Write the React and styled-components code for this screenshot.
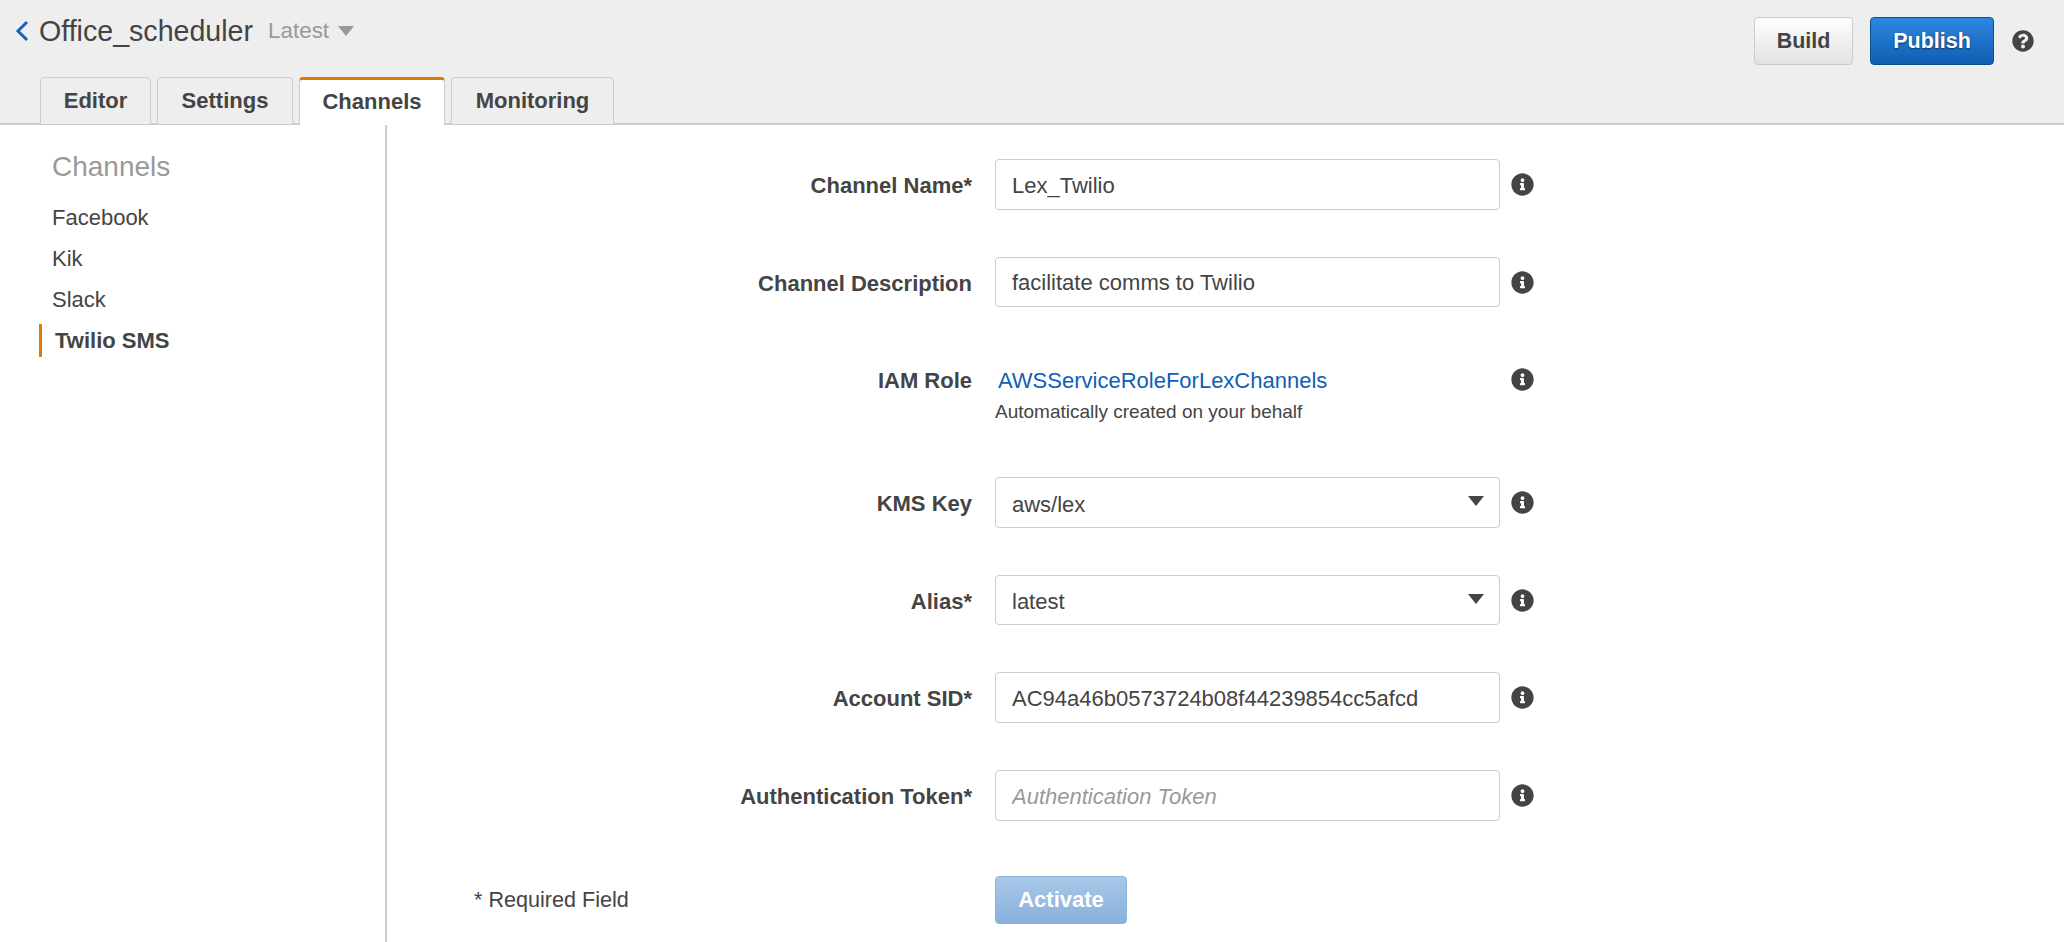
import React from "react";
import styled, { createGlobalStyle } from "styled-components";
import { FaInfoCircle, FaQuestionCircle } from "react-icons/fa";

const Global = createGlobalStyle`
  html, body { margin: 0; padding: 0; background: #fff; }
  body { font-family: "Liberation Sans", Arial, sans-serif; color: #444; overflow: hidden; }
  * { box-sizing: border-box; }
`;

const Page = styled.div`
  width: 2064px;
  height: 942px;
  display: flex;
  flex-direction: column;
  overflow: hidden;
`;

const Header = styled.header`
  height: 125px;
  flex: none;
  background: #eee;
  border-bottom: 2px solid #ccc;
  display: flex;
  flex-direction: column;
  justify-content: space-between;
`;

const TopBar = styled.div`
  display: flex;
  justify-content: space-between;
  align-items: flex-start;
  padding: 17px 30px 0 15px;
`;

const TitleGroup = styled.div`
  display: flex;
  align-items: center;
  height: 28px;
`;

const BackIcon = styled.svg`
  width: 14px;
  height: 22px;
  margin-right: 10px;
  flex: none;
`;

const Title = styled.h1`
  margin: 0;
  font-size: 28.6px;
  font-weight: 400;
  line-height: 28px;
  color: #444;
`;

const Version = styled.span`
  margin-left: 15px;
  font-size: 22.4px;
  color: #999;
`;

const VersionCaret = styled.svg`
  width: 16px;
  height: 10px;
  margin-left: 9px;
  flex: none;
`;

const Actions = styled.div`
  display: flex;
  align-items: center;
`;

const Button = styled.button`
  height: 48px;
  border-radius: 4px;
  font-family: inherit;
  font-size: 21.5px;
  font-weight: 700;
  padding: 0;
`;

const BuildButton = styled(Button)`
  width: 99px;
  color: #444;
  border: 1px solid #ccc;
  background: linear-gradient(#fff, #e2e2e2);
`;

const PublishButton = styled(Button)`
  width: 124px;
  margin-left: 17px;
  color: #fff;
  border: 1px solid #0b4f95;
  background: linear-gradient(#2e86e0, #0f5fb0);
  text-shadow: 0 1px 2px rgba(0, 0, 0, 0.55);
`;

const HelpIcon = styled(FaQuestionCircle)`
  width: 22px;
  height: 22px;
  margin-left: 18px;
  color: #444;
`;

const Tabs = styled.nav`
  display: flex;
  gap: 6px;
  padding-left: 40px;
  height: 48px;
  margin-bottom: -2px;
`;

const Tab = styled.div`
  height: 48px;
  width: ${(p) => p.$width}px;
  display: flex;
  align-items: center;
  justify-content: center;
  padding-bottom: ${(p) => (p.$active ? "2px" : "0")};
  font-size: 22px;
  font-weight: 700;
  color: #444;
  border: 1px solid #ccc;
  border-bottom: ${(p) => (p.$active ? "none" : "1px solid #ccc")};
  border-top: ${(p) => (p.$active ? "3px solid #e07b00" : "1px solid #ccc")};
  border-radius: 4px 4px 0 0;
  background: ${(p) => (p.$active ? "#fff" : "#eee")};
  position: relative;
  z-index: 1;
`;

const Body = styled.div`
  flex: 1;
  display: flex;
  min-height: 0;
`;

const Sidebar = styled.aside`
  width: 387px;
  flex: none;
  border-right: 2px solid #ccc;
  padding: 24px 0 0 39px;
`;

const SideHeading = styled.div`
  font-size: 28px;
  line-height: 36px;
  color: #999;
  padding-left: 13px;
  margin-bottom: 16px;
`;

const SideItem = styled.div`
  font-size: 22px;
  line-height: 33px;
  height: 33px;
  margin-bottom: 8px;
  color: #444;
  font-weight: ${(p) => (p.$active ? 700 : 400)};
  border-left: ${(p) => (p.$active ? "3px solid #e07b00" : "none")};
  padding-left: 13px;
`;

const Form = styled.main`
  flex: 1;
  padding: 34px 0 0 87px;
  display: flex;
  flex-direction: column;
  gap: 47.1px;
`;

const Row = styled.div`
  display: grid;
  grid-template-columns: 521px 505px 45px;
  column-gap: 0;
  min-height: 50.5px;
`;

const Label = styled.label`
  height: 50.5px;
  font-size: 22px;
  font-weight: 700;
  line-height: 54px;
  text-align: right;
  padding-right: 23px;
  color: #444;
`;

const TextInput = styled.input`
  width: 100%;
  height: 50.5px;
  border: 1px solid #ccc;
  border-radius: 4px;
  padding: 3px 16px 0;
  font-family: inherit;
  font-size: 22px;
  color: #444;
  background: #fff;
  outline: none;
  &::placeholder { color: #999; font-style: italic; opacity: 1; }
`;

const SelectWrap = styled.div`
  position: relative;
`;

const Select = styled.select`
  width: 100%;
  height: 50.5px;
  appearance: none;
  border: 1px solid #ccc;
  border-radius: 4px;
  padding: 3px 16px 0;
  font-family: inherit;
  font-size: 22px;
  color: #444;
  background: #fff;
  outline: none;
`;

const SelectCaret = styled.svg`
  position: absolute;
  right: 16px;
  top: 19px;
  width: 16px;
  height: 10px;
`;

const InfoCell = styled.div`
  display: flex;
  align-items: flex-start;
  padding: 14px 0 0 11px;
`;

const InfoIcon = styled(FaInfoCircle)`
  width: 23px;
  height: 23px;
  color: #444;
`;

const RoleRow = styled(Row)`
  min-height: 76px;
`;

const RoleCell = styled.div`
  padding-top: 11px;
`;

const RoleLink = styled.a`
  display: block;
  font-size: 22px;
  line-height: 32px;
  color: #0f5fb8;
  padding-left: 3px;
`;

const RoleNote = styled.div`
  font-size: 19px;
  line-height: 22px;
  margin-top: 4px;
  color: #444;
`;

const FooterRow = styled(Row)`
  margin-top: 8px;
`;

const RequiredNote = styled.div`
  font-size: 21.6px;
  line-height: 47px;
  color: #444;
`;

const ActivateButton = styled(Button)`
  width: 132px;
  font-size: 22px;
  color: #fff;
  border: 1px solid #8db5dc;
  background: linear-gradient(#a9c8e8, #87b0db);
`;

const Caret = ({ as: C, fill }) => (
  <C viewBox="0 0 16 10">
    <path d="M0 0h16L8 10z" fill={fill} />
  </C>
);

const Info = () => (
  <InfoCell>
    <InfoIcon />
  </InfoCell>
);

const TextRow = ({ label, value, placeholder }) => (
  <Row>
    <Label>{label}</Label>
    <TextInput readOnly value={value} placeholder={placeholder} />
    <Info />
  </Row>
);

const SelectRow = ({ label, value }) => (
  <Row>
    <Label>{label}</Label>
    <SelectWrap>
      <Select value={value} onChange={() => {}}>
        <option value={value}>{value}</option>
      </Select>
      <Caret as={SelectCaret} fill="#444" />
    </SelectWrap>
    <Info />
  </Row>
);

export default function App() {
  return (
    <Page>
      <Global />
      <Header>
        <TopBar>
          <TitleGroup>
            <BackIcon viewBox="0 0 14 22">
              <path d="M12 2 3 11l9 9" fill="none" stroke="#1166bb" strokeWidth="3" />
            </BackIcon>
            <Title>Office_scheduler</Title>
            <Version>Latest</Version>
            <Caret as={VersionCaret} fill="#999" />
          </TitleGroup>
          <Actions>
            <BuildButton>Build</BuildButton>
            <PublishButton>Publish</PublishButton>
            <HelpIcon />
          </Actions>
        </TopBar>
        <Tabs>
          <Tab $width={111}>Editor</Tab>
          <Tab $width={136}>Settings</Tab>
          <Tab $width={146} $active>Channels</Tab>
          <Tab $width={163}>Monitoring</Tab>
        </Tabs>
      </Header>
      <Body>
        <Sidebar>
          <SideHeading>Channels</SideHeading>
          <SideItem>Facebook</SideItem>
          <SideItem>Kik</SideItem>
          <SideItem>Slack</SideItem>
          <SideItem $active>Twilio SMS</SideItem>
        </Sidebar>
        <Form>
          <TextRow label="Channel Name*" value="Lex_Twilio" />
          <TextRow label="Channel Description" value="facilitate comms to Twilio" />
          <RoleRow>
            <Label>IAM Role</Label>
            <RoleCell>
              <RoleLink>AWSServiceRoleForLexChannels</RoleLink>
              <RoleNote>Automatically created on your behalf</RoleNote>
            </RoleCell>
            <Info />
          </RoleRow>
          <SelectRow label="KMS Key" value="aws/lex" />
          <SelectRow label="Alias*" value="latest" />
          <TextRow label="Account SID*" value="AC94a46b0573724b08f44239854cc5afcd" />
          <TextRow label="Authentication Token*" placeholder="Authentication Token" />
          <FooterRow>
            <RequiredNote>* Required Field</RequiredNote>
            <ActivateButton>Activate</ActivateButton>
          </FooterRow>
        </Form>
      </Body>
    </Page>
  );
}
